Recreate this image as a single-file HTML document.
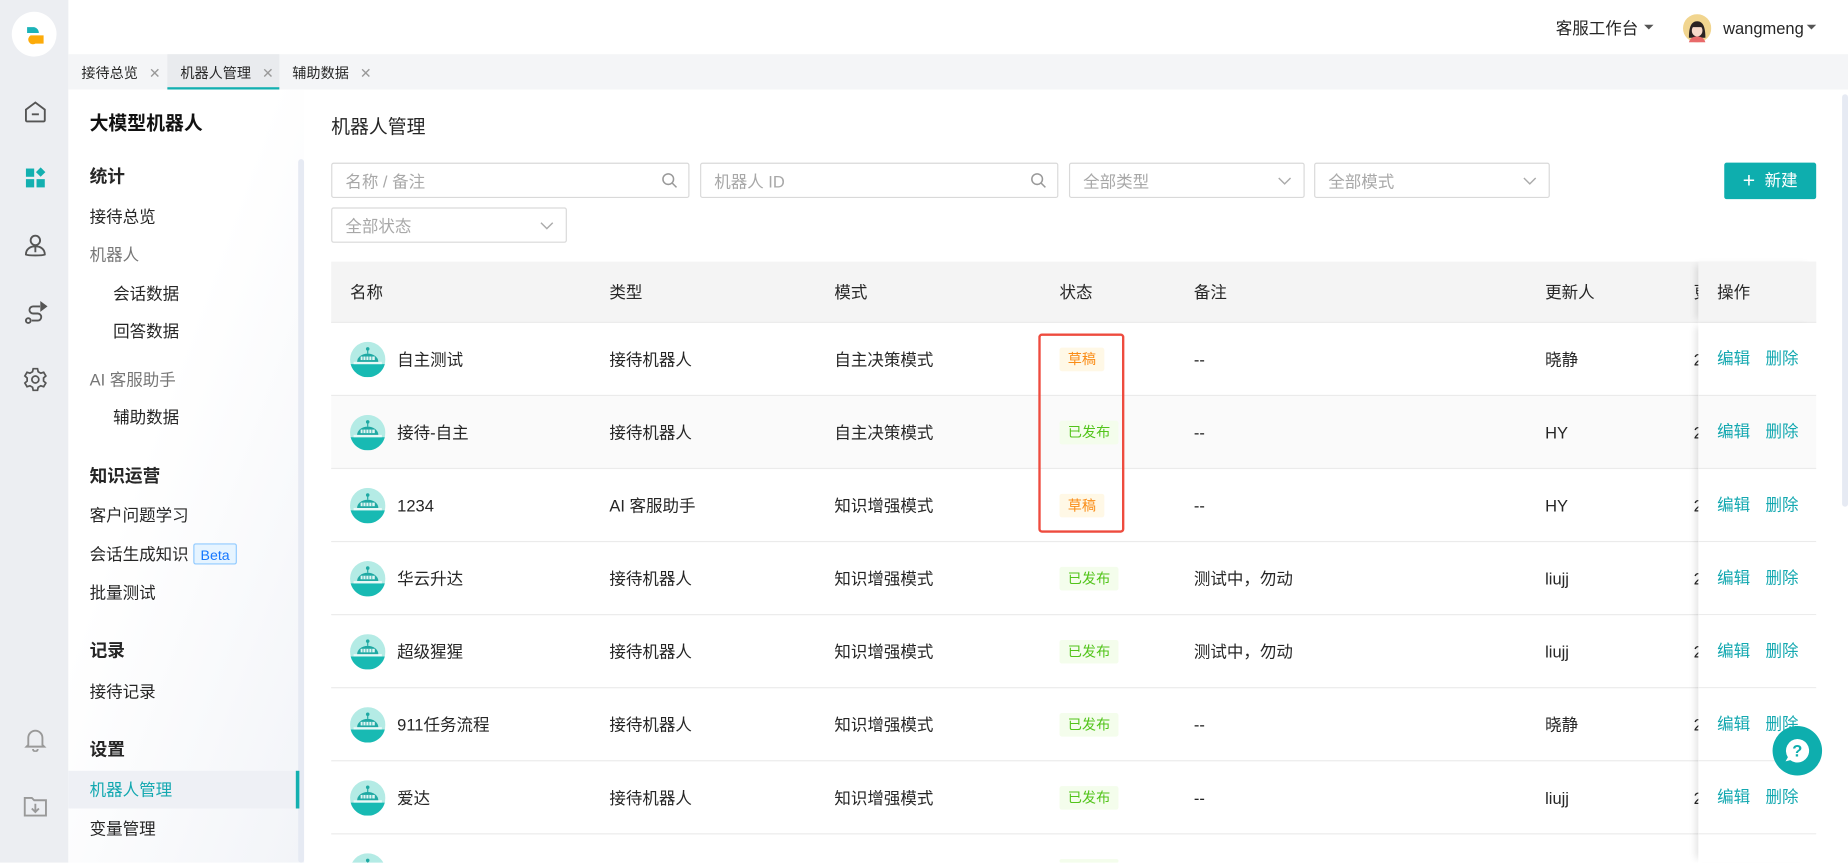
<!DOCTYPE html>
<html style="overflow:hidden"><head><meta charset="utf-8"><style>
html,body{margin:0;padding:0;width:1848px;height:863px;overflow:hidden;background:#fff;}
body{position:relative;}
#w{position:absolute;left:0;top:0;width:1568px;height:732px;transform:scale(1.178571);transform-origin:0 0;font-family:"Liberation Sans","Noto Sans CJK SC",sans-serif;color:#262626;font-size:14px;overflow:hidden;}
.a{position:absolute;}
.t{position:absolute;white-space:nowrap;line-height:20px;}
.rail{left:0;top:0;width:58px;height:732px;background:#eceef2;}
.side{left:58px;top:76px;width:200px;height:656px;background:linear-gradient(110deg,#fff 40%,#f2f4f8);}
.inp{position:absolute;height:30px;border:1px solid #d9d9d9;border-radius:2px;box-sizing:border-box;background:#fff;}
.inp span{position:absolute;left:11px;top:5px;color:#a8a8a8;line-height:20px;}
.row{position:absolute;left:281px;width:1160px;height:62px;border-bottom:1px solid #ebebeb;box-sizing:border-box;}
.tag{position:absolute;left:899px;height:20px;line-height:20px;font-size:12px;padding:0 7px;border-radius:2px;}
.d{background:#fff8e6;color:#fa8c16;}
.p{background:#f4fdec;color:#52c41a;}
.op{position:absolute;left:1441px;width:100px;height:62px;border-bottom:1px solid #ebebeb;box-sizing:border-box;background:#fff;}
.op span{position:absolute;top:20px;color:#13a8b0;line-height:20px;}
</style></head><body><div id="w">
<div class="a rail"></div>
<div class="a" style="left:10px;top:10px;width:38px;height:38px;border-radius:50%;background:#fff;"></div>
<svg class="a" style="left:22px;top:22px" width="16" height="16" viewBox="0 0 16 16"><path d="M1 1h6a5 5 0 0 1 4 5H1z" fill="#1bb3b8"/><path d="M4 8h11v7H8A4 4 0 0 1 4 8z" fill="#fcab0a"/></svg>
<svg class="a" style="left:19px;top:84px" width="22" height="22" viewBox="0 0 22 22" fill="none" stroke="#555" stroke-width="1.6"><path d="M3 9L11 3l8 6v9a1 1 0 0 1-1 1H4a1 1 0 0 1-1-1z"/><path d="M8 13h6"/></svg>
<svg class="a" style="left:19px;top:140px" width="22" height="22" viewBox="0 0 22 22" fill="#13b0b0"><rect x="3" y="3" width="7" height="7"/><rect x="3" y="12" width="7" height="7"/><rect x="12" y="12" width="7" height="7"/><path d="M15.5 2l4 4-4 4-4-4z"/></svg>
<svg class="a" style="left:19px;top:197px" width="22" height="22" viewBox="0 0 22 22" fill="none" stroke="#555" stroke-width="1.6"><circle cx="11" cy="7" r="4"/><path d="M3 19c0-5 4-7 8-7s8 2 8 7c-2 1-14 1-16 0z"/><path d="M11 12v5"/></svg>
<svg class="a" style="left:19px;top:254px" width="22" height="22" viewBox="0 0 22 22" fill="none" stroke="#555" stroke-width="1.6"><path d="M15 6H9a3 3 0 0 0 0 6h4a3 3 0 0 1 0 6H8"/><circle cx="5" cy="18" r="2"/><path d="M16 3l4 3-4 3z" fill="#555"/></svg>
<svg class="a" style="left:19px;top:311px" width="22" height="22" viewBox="0 0 24 24" fill="none" stroke="#555" stroke-width="1.6"><circle cx="12" cy="12" r="3.2"/><path d="M10 2h4l.6 2.8 2.4 1.4 2.7-.9 2 3.4-2.1 1.9v2.8l2.1 1.9-2 3.4-2.7-.9-2.4 1.4L14 22h-4l-.6-2.8-2.4-1.4-2.7.9-2-3.4 2.1-1.9v-2.8L2.3 8.7l2-3.4 2.7.9 2.4-1.4z"/></svg>
<svg class="a" style="left:19px;top:616px" width="22" height="22" viewBox="0 0 22 22" fill="none" stroke="#999" stroke-width="1.6"><path d="M5 16V10a6 6 0 0 1 12 0v6l1.5 1.5h-15z"/><path d="M9 19.5a2 2 0 0 0 4 0"/></svg>
<svg class="a" style="left:19px;top:673px" width="22" height="22" viewBox="0 0 22 22" fill="none" stroke="#999" stroke-width="1.6"><path d="M2 4h6l2 2h10v13H2z"/><path d="M11 9v7M8 13l3 3 3-3"/></svg>

<div class="t" style="left:1320px;top:14px;">客服工作台</div>
<div class="a" style="left:1395px;top:21px;border:4px solid transparent;border-top:4px solid #555;"></div>
<svg class="a" style="left:1428px;top:12px" width="24" height="24" viewBox="0 0 24 24"><circle cx="12" cy="12" r="12" fill="#f1d58f"/><path d="M5 20c0-9 2-14 7-14s7 5 7 14z" fill="#2a2222"/><ellipse cx="12" cy="14" rx="4.5" ry="5" fill="#f7d9c9"/><path d="M7 11c1-4 9-4 10 0z" fill="#2a2222"/><path d="M5 24c1-4 4-5 7-5s6 1 7 5z" fill="#e86a6a"/></svg>
<div class="t" style="left:1462px;top:14px;font-size:14px;">wangmeng</div>
<div class="a" style="left:1533px;top:21px;border:4px solid transparent;border-top:4px solid #555;"></div>

<div class="a" style="left:58px;top:46px;width:1510px;height:30px;background:#f4f5f7;"></div>
<div class="a" style="left:142px;top:46px;width:95px;height:30px;background:#e9ebee;border-bottom:2px solid #13b0b0;box-sizing:border-box;"></div>
<div class="t" style="left:69px;top:52px;font-size:12px;">接待总览 <span style="color:#999;margin-left:6px">✕</span></div>
<div class="t" style="left:153px;top:52px;font-size:12px;">机器人管理 <span style="color:#999;margin-left:6px">✕</span></div>
<div class="t" style="left:248px;top:52px;font-size:12px;">辅助数据 <span style="color:#999;margin-left:6px">✕</span></div>

<div class="a side"></div>
<div class="a" style="left:253px;top:135px;width:5px;height:597px;background:#e6eaf3;border-radius:3px;"></div>
<div class="t" style="left:76px;top:96px;font-size:16px;font-weight:bold;color:#111;">大模型机器人</div>
<div class="t" style="left:76px;top:141px;font-size:15px;font-weight:bold;">统计</div>
<div class="t" style="left:76px;top:174px;">接待总览</div>
<div class="t" style="left:76px;top:206px;color:#777;">机器人</div>
<div class="t" style="left:96px;top:239px;">会话数据</div>
<div class="t" style="left:96px;top:271px;">回答数据</div>
<div class="t" style="left:76px;top:312px;color:#777;">AI 客服助手</div>
<div class="t" style="left:96px;top:344px;">辅助数据</div>
<div class="t" style="left:76px;top:395px;font-size:15px;font-weight:bold;">知识运营</div>
<div class="t" style="left:76px;top:427px;">客户问题学习</div>
<div class="t" style="left:76px;top:460px;">会话生成知识</div>
<div class="a" style="left:164px;top:461px;width:37px;height:18px;border:1px solid #91caff;background:#e6f4ff;color:#1677ff;font-size:12px;line-height:18px;text-align:center;border-radius:2px;box-sizing:border-box;">Beta</div>
<div class="t" style="left:76px;top:493px;">批量测试</div>
<div class="t" style="left:76px;top:543px;font-size:15px;font-weight:bold;">记录</div>
<div class="t" style="left:76px;top:577px;">接待记录</div>
<div class="t" style="left:76px;top:627px;font-size:15px;font-weight:bold;">设置</div>
<div class="a" style="left:58px;top:654px;width:194px;height:32px;background:#eef0f5;"></div>
<div class="a" style="left:251px;top:654px;width:3px;height:32px;background:#13b0b0;"></div>
<div class="t" style="left:76px;top:660px;color:#13a8b0;">机器人管理</div>
<div class="t" style="left:76px;top:693px;">变量管理</div>

<div class="t" style="left:281px;top:99px;font-size:16px;">机器人管理</div>
<div class="inp" style="left:281px;top:138px;width:304px;"><span>名称 / 备注</span></div>
<div class="inp" style="left:594px;top:138px;width:304px;"><span>机器人 ID</span></div>
<div class="inp" style="left:907px;top:138px;width:200px;"><span>全部类型</span></div>
<div class="inp" style="left:1115px;top:138px;width:200px;"><span>全部模式</span></div>
<div class="inp" style="left:281px;top:176px;width:200px;"><span>全部状态</span></div>
<svg class="a" style="left:561px;top:146px" width="14" height="14" viewBox="0 0 14 14" fill="none" stroke="#999" stroke-width="1.3"><circle cx="6" cy="6" r="4.5"/><path d="M9.5 9.5L13 13"/></svg>
<svg class="a" style="left:874px;top:146px" width="14" height="14" viewBox="0 0 14 14" fill="none" stroke="#999" stroke-width="1.3"><circle cx="6" cy="6" r="4.5"/><path d="M9.5 9.5L13 13"/></svg>
<svg class="a" style="left:1084px;top:148px" width="12" height="10" viewBox="0 0 12 10" fill="none" stroke="#aaa" stroke-width="1.2"><path d="M1 3l5 5 5-5"/></svg>
<svg class="a" style="left:1292px;top:148px" width="12" height="10" viewBox="0 0 12 10" fill="none" stroke="#aaa" stroke-width="1.2"><path d="M1 3l5 5 5-5"/></svg>
<svg class="a" style="left:458px;top:186px" width="12" height="10" viewBox="0 0 12 10" fill="none" stroke="#aaa" stroke-width="1.2"><path d="M1 3l5 5 5-5"/></svg>
<div class="a" style="left:1463px;top:138px;width:78px;height:31px;background:#0eaeae;border-radius:2px;color:#fff;line-height:31px;text-align:center;font-size:14px;"><span style="font-size:18px;vertical-align:-1px;margin-right:8px;">+</span>新建</div>

<div class="a" style="left:281px;top:222px;width:1260px;height:52px;background:#f4f4f4;border-bottom:1px solid #ebebeb;box-sizing:border-box;"></div>
<div class="t" style="left:297px;top:238px;">名称</div>
<div class="t" style="left:517px;top:238px;">类型</div>
<div class="t" style="left:708px;top:238px;">模式</div>
<div class="t" style="left:899px;top:238px;">状态</div>
<div class="t" style="left:1013px;top:238px;">备注</div>
<div class="t" style="left:1311px;top:238px;">更新人</div>
<div class="t" style="left:1437px;top:238px;">更</div>

<div class="row" style="top:274px;"></div>
<div class="row" style="top:336px;background:#fafafa;"></div>
<div class="row" style="top:398px;"></div>
<div class="row" style="top:460px;"></div>
<div class="row" style="top:522px;"></div>
<div class="row" style="top:584px;"></div>
<div class="row" style="top:646px;"></div>
<div class="row" style="top:708px;height:24px;border-bottom:none;"></div>

<svg width="0" height="0" style="position:absolute"><defs><symbol id="bot" viewBox="0 0 30 30"><circle cx="15" cy="15" r="15" fill="#b4ebe5"/><path d="M0.5 19h29A15 15 0 0 1 .5 19z" fill="#18bab3"/><rect x="3" y="17" width="24" height="2" fill="#e8f9f7"/><path d="M6 17a9 7 0 0 1 18 0z" fill="#1fa9a3"/><rect x="9" y="12.5" width="12" height="3" fill="#e0f5f3"/><path d="M11 12.5v3M13.5 12.5v3M16 12.5v3M18.5 12.5v3" stroke="#1fa9a3" stroke-width=".7"/><path d="M15 10V7" stroke="#1fa9a3"/><circle cx="15" cy="6" r="1.5" fill="#1fa9a3"/></symbol></defs></svg>

<svg class="a" style="left:297px;top:290px" width="30" height="30"><use href="#bot"/></svg>
<svg class="a" style="left:297px;top:352px" width="30" height="30"><use href="#bot"/></svg>
<svg class="a" style="left:297px;top:414px" width="30" height="30"><use href="#bot"/></svg>
<svg class="a" style="left:297px;top:476px" width="30" height="30"><use href="#bot"/></svg>
<svg class="a" style="left:297px;top:538px" width="30" height="30"><use href="#bot"/></svg>
<svg class="a" style="left:297px;top:600px" width="30" height="30"><use href="#bot"/></svg>
<svg class="a" style="left:297px;top:662px" width="30" height="30"><use href="#bot"/></svg>
<svg class="a" style="left:297px;top:724px" width="30" height="8" viewBox="0 0 30 8"><use href="#bot" width="30" height="30"/></svg>

<div class="t" style="left:337px;top:295px;">自主测试</div><div class="t" style="left:517px;top:295px;">接待机器人</div><div class="t" style="left:708px;top:295px;">自主决策模式</div><div class="tag d" style="top:295px;">草稿</div><div class="t" style="left:1013px;top:295px;">--</div><div class="t" style="left:1311px;top:295px;">晓静</div><div class="t" style="left:1437px;top:295px;">2</div>
<div class="t" style="left:337px;top:357px;">接待-自主</div><div class="t" style="left:517px;top:357px;">接待机器人</div><div class="t" style="left:708px;top:357px;">自主决策模式</div><div class="tag p" style="top:357px;">已发布</div><div class="t" style="left:1013px;top:357px;">--</div><div class="t" style="left:1311px;top:357px;">HY</div><div class="t" style="left:1437px;top:357px;">2</div>
<div class="t" style="left:337px;top:419px;">1234</div><div class="t" style="left:517px;top:419px;">AI 客服助手</div><div class="t" style="left:708px;top:419px;">知识增强模式</div><div class="tag d" style="top:419px;">草稿</div><div class="t" style="left:1013px;top:419px;">--</div><div class="t" style="left:1311px;top:419px;">HY</div><div class="t" style="left:1437px;top:419px;">2</div>
<div class="t" style="left:337px;top:481px;">华云升达</div><div class="t" style="left:517px;top:481px;">接待机器人</div><div class="t" style="left:708px;top:481px;">知识增强模式</div><div class="tag p" style="top:481px;">已发布</div><div class="t" style="left:1013px;top:481px;">测试中，勿动</div><div class="t" style="left:1311px;top:481px;">liujj</div><div class="t" style="left:1437px;top:481px;">2</div>
<div class="t" style="left:337px;top:543px;">超级猩猩</div><div class="t" style="left:517px;top:543px;">接待机器人</div><div class="t" style="left:708px;top:543px;">知识增强模式</div><div class="tag p" style="top:543px;">已发布</div><div class="t" style="left:1013px;top:543px;">测试中，勿动</div><div class="t" style="left:1311px;top:543px;">liujj</div><div class="t" style="left:1437px;top:543px;">2</div>
<div class="t" style="left:337px;top:605px;">911任务流程</div><div class="t" style="left:517px;top:605px;">接待机器人</div><div class="t" style="left:708px;top:605px;">知识增强模式</div><div class="tag p" style="top:605px;">已发布</div><div class="t" style="left:1013px;top:605px;">--</div><div class="t" style="left:1311px;top:605px;">晓静</div><div class="t" style="left:1437px;top:605px;">2</div>
<div class="t" style="left:337px;top:667px;">爱达</div><div class="t" style="left:517px;top:667px;">接待机器人</div><div class="t" style="left:708px;top:667px;">知识增强模式</div><div class="tag p" style="top:667px;">已发布</div><div class="t" style="left:1013px;top:667px;">--</div><div class="t" style="left:1311px;top:667px;">liujj</div><div class="t" style="left:1437px;top:667px;">2</div>
<div class="tag p" style="top:729px;height:3px;overflow:hidden;">已发布</div>

<div class="a" style="left:1441px;top:222px;width:100px;height:52px;background:#f4f4f4;border-bottom:1px solid #ebebeb;box-sizing:border-box;box-shadow:-5px 0 6px -3px rgba(0,0,0,.12);"></div>
<div class="t" style="left:1457px;top:238px;">操作</div>
<div class="a" style="left:1441px;top:274px;width:100px;height:458px;box-shadow:-5px 0 6px -3px rgba(0,0,0,.12);"></div>
<div class="op" style="top:274px;"><span style="left:16px">编辑</span><span style="left:57px">删除</span></div>
<div class="op" style="top:336px;background:#fafafa;"><span style="left:16px">编辑</span><span style="left:57px">删除</span></div>
<div class="op" style="top:398px;"><span style="left:16px">编辑</span><span style="left:57px">删除</span></div>
<div class="op" style="top:460px;"><span style="left:16px">编辑</span><span style="left:57px">删除</span></div>
<div class="op" style="top:522px;"><span style="left:16px">编辑</span><span style="left:57px">删除</span></div>
<div class="op" style="top:584px;"><span style="left:16px">编辑</span><span style="left:57px">删除</span></div>
<div class="op" style="top:646px;"><span style="left:16px">编辑</span><span style="left:57px">删除</span></div>
<div class="op" style="top:708px;height:24px;border-bottom:none;"></div>

<div class="a" style="left:881px;top:283px;width:73px;height:169px;border:2px solid #ee4b3e;border-radius:3px;box-sizing:border-box;"></div>
<div class="a" style="left:1563px;top:80px;width:5px;height:350px;background:#e6eaf3;border-radius:3px;"></div>
<div class="a" style="left:1504px;top:616px;width:42px;height:42px;border-radius:50%;background:#0eaeae;"></div>
<svg class="a" style="left:1513px;top:625px" width="24" height="24" viewBox="0 0 24 24"><path d="M12 2a10 10 0 1 1-6 18l-4 1 2-3.5A10 10 0 0 1 12 2z" fill="#fff"/><text x="12" y="17" text-anchor="middle" font-family="Liberation Sans" font-size="14" font-weight="bold" fill="#0eaeae">?</text></svg>
</div></body></html>
